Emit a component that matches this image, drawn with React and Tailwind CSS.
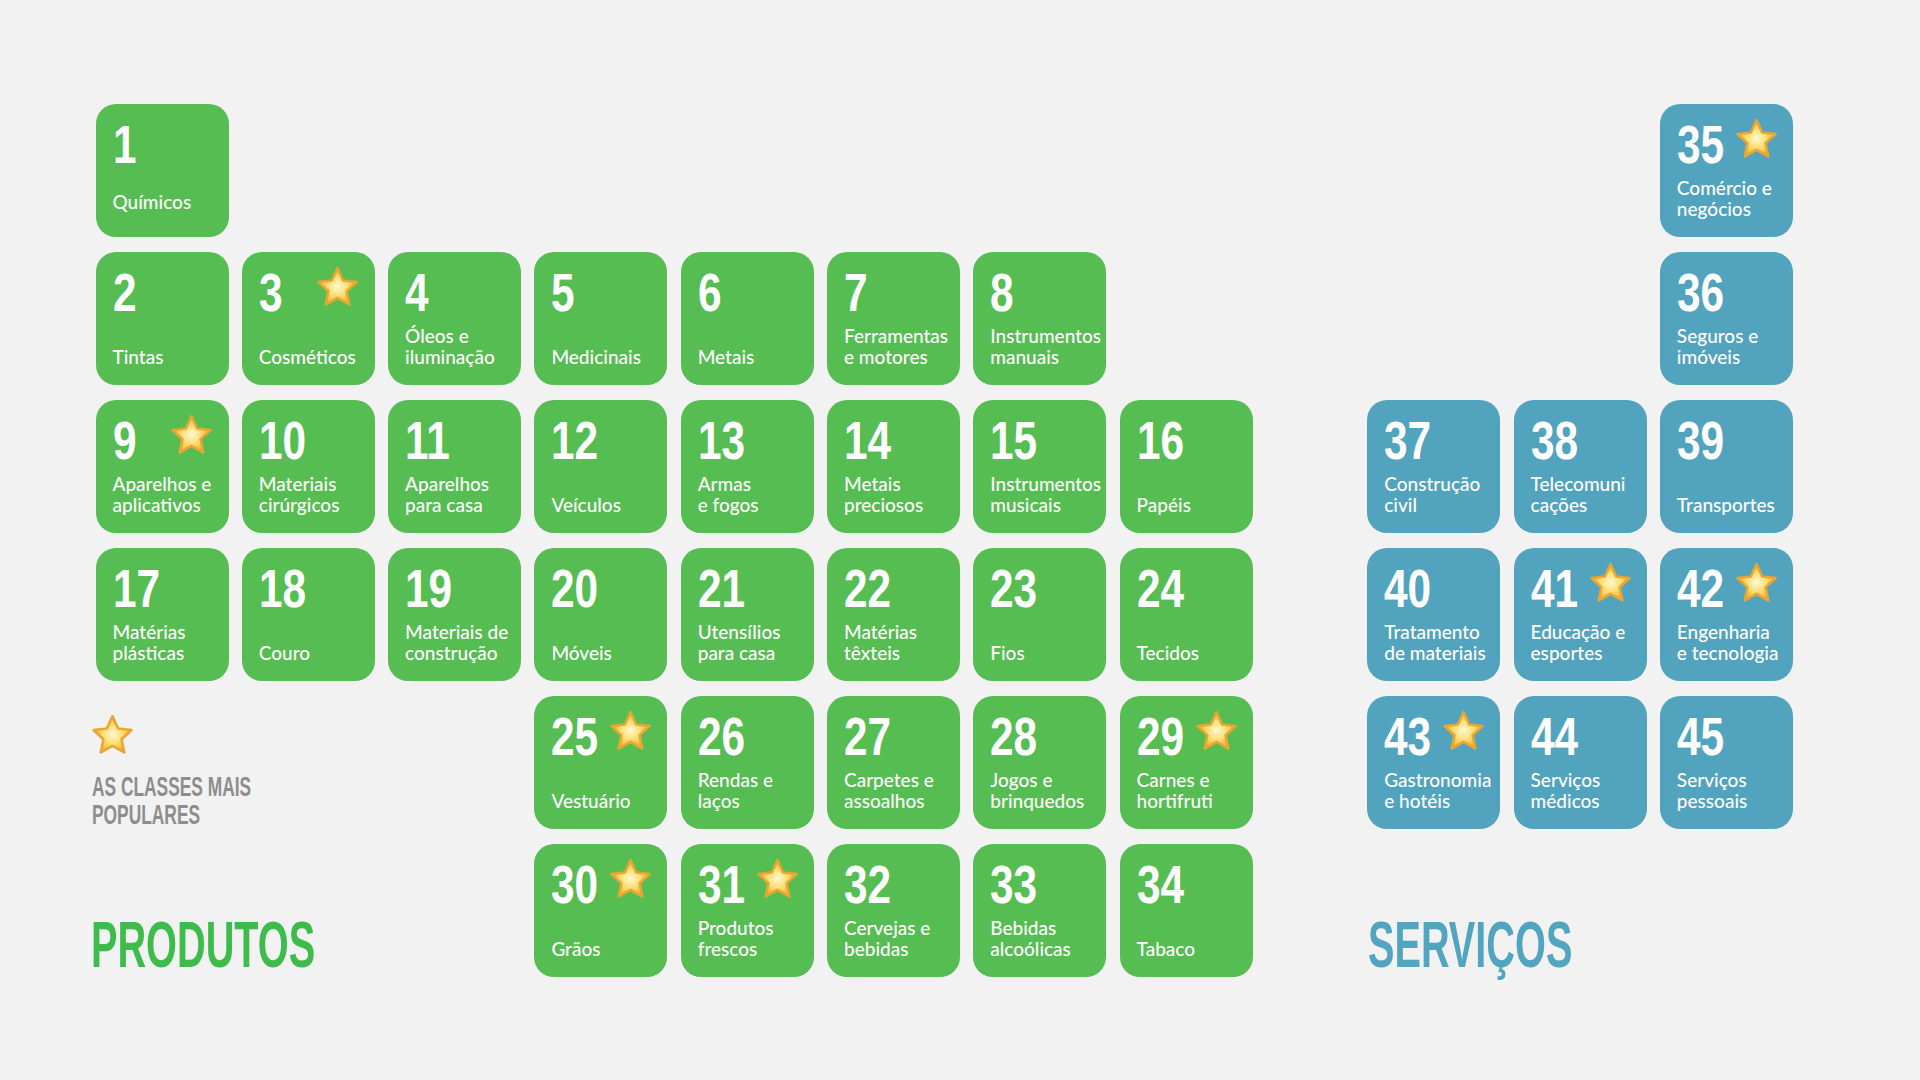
import React from 'react';

const COL = ['col-start-1', 'col-start-2', 'col-start-3', 'col-start-4', 'col-start-5', 'col-start-6', 'col-start-7', 'col-start-8'];
const ROW = ['row-start-1', 'row-start-2', 'row-start-3', 'row-start-4', 'row-start-5', 'row-start-6'];

// [numero, rotulo, linha, coluna, estrela]
const produtos = [
  [1, 'Químicos', 1, 1],
  [2, 'Tintas', 2, 1],
  [3, 'Cosméticos', 2, 2, true],
  [4, 'Óleos e|iluminação', 2, 3],
  [5, 'Medicinais', 2, 4],
  [6, 'Metais', 2, 5],
  [7, 'Ferramentas|e motores', 2, 6],
  [8, 'Instrumentos|manuais', 2, 7],
  [9, 'Aparelhos e|aplicativos', 3, 1, true],
  [10, 'Materiais|cirúrgicos', 3, 2],
  [11, 'Aparelhos|para casa', 3, 3],
  [12, 'Veículos', 3, 4],
  [13, 'Armas|e fogos', 3, 5],
  [14, 'Metais|preciosos', 3, 6],
  [15, 'Instrumentos|musicais', 3, 7],
  [16, 'Papéis', 3, 8],
  [17, 'Matérias|plásticas', 4, 1],
  [18, 'Couro', 4, 2],
  [19, 'Materiais de|construção', 4, 3],
  [20, 'Móveis', 4, 4],
  [21, 'Utensílios|para casa', 4, 5],
  [22, 'Matérias|têxteis', 4, 6],
  [23, 'Fios', 4, 7],
  [24, 'Tecidos', 4, 8],
  [25, 'Vestuário', 5, 4, true],
  [26, 'Rendas e|laços', 5, 5],
  [27, 'Carpetes e|assoalhos', 5, 6],
  [28, 'Jogos e|brinquedos', 5, 7],
  [29, 'Carnes e|hortifruti', 5, 8, true],
  [30, 'Grãos', 6, 4, true],
  [31, 'Produtos|frescos', 6, 5, true],
  [32, 'Cervejas e|bebidas', 6, 6],
  [33, 'Bebidas|alcoólicas', 6, 7],
  [34, 'Tabaco', 6, 8],
];

const servicos = [
  [35, 'Comércio e|negócios', 1, 3, true],
  [36, 'Seguros e|imóveis', 2, 3],
  [37, 'Construção|civil', 3, 1],
  [38, 'Telecomuni|cações', 3, 2],
  [39, 'Transportes', 3, 3],
  [40, 'Tratamento|de materiais', 4, 1],
  [41, 'Educação e|esportes', 4, 2, true],
  [42, 'Engenharia|e tecnologia', 4, 3, true],
  [43, 'Gastronomia|e hotéis', 5, 1, true],
  [44, 'Serviços|médicos', 5, 2],
  [45, 'Serviços|pessoais', 5, 3],
];

function Star({ className }) {
  return (
    <svg viewBox="3 3 94 90" className={className}>
      <defs>
        <radialGradient id="starFill" cx="50%" cy="50%" r="55%">
          <stop offset="0%" stopColor="#fff8d2" />
          <stop offset="45%" stopColor="#fde07a" />
          <stop offset="80%" stopColor="#f6bd3c" />
          <stop offset="100%" stopColor="#e69a22" />
        </radialGradient>
      </defs>
      <polygon
        points="50,6 62.93,34.2 93.75,37.79 70.92,58.8 77.04,89.21 50,74 22.96,89.21 29.08,58.8 6.25,37.79 37.07,34.2"
        fill="url(#starFill)"
        stroke="#eaa632"
        strokeWidth="6"
        strokeLinejoin="round"
      />
    </svg>
  );
}

function Tile({ n, label, row, col, star, color }) {
  const pb = n === 1 ? 'pb-[25px]' : 'pb-[18px]';
  return (
    <div className={`${ROW[row - 1]} ${COL[col - 1]} ${color} ${pb} flex h-[133px] w-[133px] flex-col justify-between rounded-[20px] pl-[17px] pr-[17px] pt-[14px] text-white`}>
      <div className="flex items-start justify-between">
        <span className="inline-block origin-left scale-x-80 font-['Liberation_Sans',sans-serif] text-[53px] font-bold leading-none">{n}</span>
        {star && <Star className="mt-[1px] h-[39px] w-[41px] shrink-0" />}
      </div>
      <div className="whitespace-nowrap font-['Lato',sans-serif] text-[19px] font-medium leading-[21px]">
        {label.split('|').map((l, i) => (
          <div key={i}>{l}</div>
        ))}
      </div>
    </div>
  );
}

export default function App() {
  return (
    <div className="flex min-h-screen w-full bg-[#f2f2f2] pl-[95.5px] pt-[103.5px]">
      <div className="grid grid-cols-[repeat(8,133px)] grid-rows-[repeat(6,133px)] gap-x-[13.3px] gap-y-[15.1px]">
        {produtos.map(([n, label, row, col, star]) => (
          <Tile key={n} n={n} label={label} row={row} col={col} star={star} color="bg-[#55bd51]" />
        ))}
        <div className="col-span-3 col-start-1 row-start-5 flex flex-col">
          <Star className="ml-[-4px] mt-[19px] h-[39px] w-[41px]" />
          <div className="ml-[-3.5px] mt-[19px] inline-block origin-left scale-x-[0.62] whitespace-nowrap font-['Liberation_Sans',sans-serif] text-[28px] font-bold leading-[28px] text-[#8d8d8d]">
            AS CLASSES MAIS
            <br />
            POPULARES
          </div>
        </div>
        <div className="col-span-3 col-start-1 row-start-6 self-end">
          <div className="ml-[-5px] origin-left scale-x-[0.62] whitespace-nowrap font-['Liberation_Sans',sans-serif] text-[64px] font-bold leading-none text-[#3dbc4c]">
            PRODUTOS
          </div>
        </div>
      </div>
      <div className="ml-[114.7px] grid grid-cols-[repeat(3,133px)] grid-rows-[repeat(6,133px)] gap-x-[13.3px] gap-y-[15.1px]">
        {servicos.map(([n, label, row, col, star]) => (
          <Tile key={n} n={n} label={label} row={row} col={col} star={star} color="bg-[#52a3be]" />
        ))}
        <div className="col-span-3 col-start-1 row-start-6 self-end">
          <div className="ml-[1px] origin-left scale-x-[0.62] whitespace-nowrap font-['Liberation_Sans',sans-serif] text-[64px] font-bold leading-none text-[#52a5c0]">
            SERVIÇOS
          </div>
        </div>
      </div>
    </div>
  );
}
